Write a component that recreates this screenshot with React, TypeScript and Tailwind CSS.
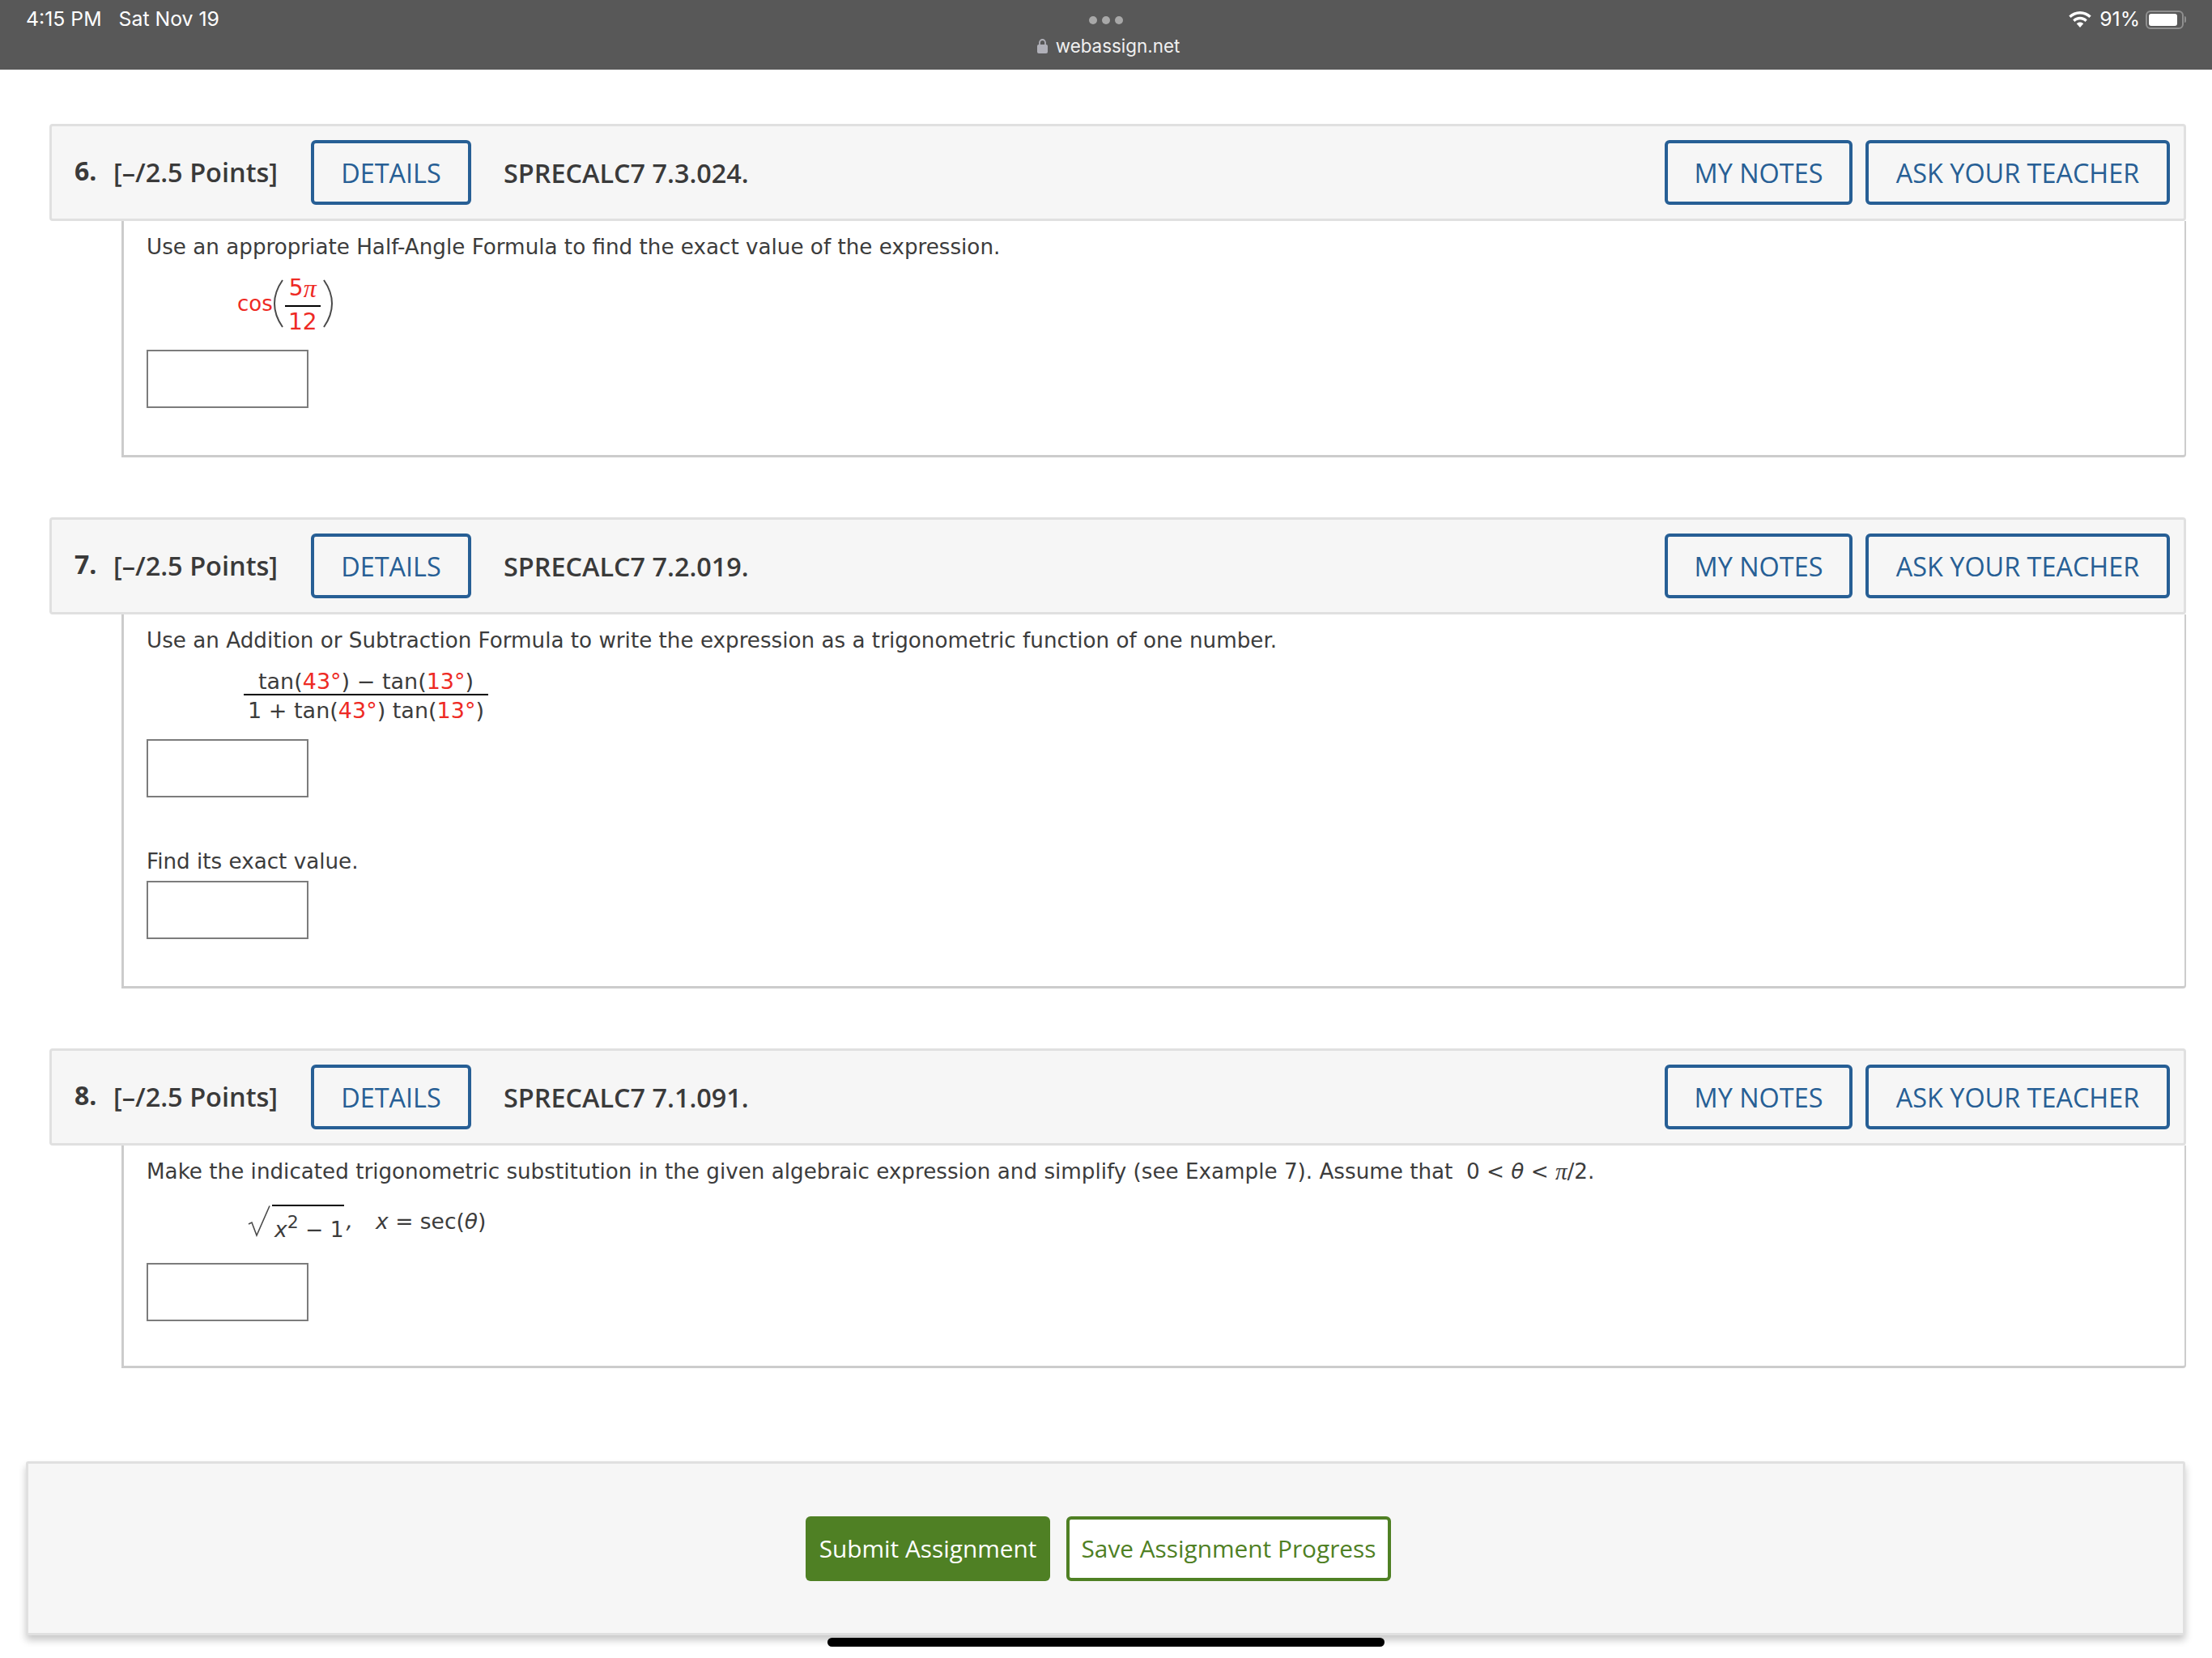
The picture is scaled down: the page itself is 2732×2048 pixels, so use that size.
import type { ReactNode } from "react";

const RED = "text-[#ee2a24]";

function Answer({ className = "" }: { className?: string }) {
  return <div className={`h-[72px] w-[200px] border-[2px] border-[#7c7c7c] bg-white ${className}`} />;
}

function OutlineButton({ label, width }: { label: string; width: string }) {
  return (
    <div
      className={`flex h-[80px] items-center justify-center rounded-[6px] border-[4px] border-[#275f95] text-[32.400px] font-medium text-[#275f95] ${width}`}
    >
      {label}
    </div>
  );
}

function Question({
  num,
  code,
  bodyHeight,
  children,
}: {
  num: string;
  code: string;
  bodyHeight: string;
  children: ReactNode;
}) {
  return (
    <section className="w-[2639px]">
      <header className="flex h-[120px] items-center rounded-[4px] border-[3px] border-[#e0e0e0] bg-[#f6f6f6] pl-[28px] pr-[17px] font-['Open_Sans',sans-serif] text-[#3a3a3a]">
        <span className="mb-[4px] w-[48px] text-[32px] font-bold">{num}</span>
        <span className="w-[244px] text-[32.500px] font-semibold">[–/2.5 Points]</span>
        <OutlineButton label="DETAILS" width="w-[198px]" />
        <span className="ml-[40px] text-[32.400px] font-semibold">{code}</span>
        <div className="ml-auto flex gap-[16px]">
          <OutlineButton label="MY NOTES" width="w-[232px]" />
          <OutlineButton label="ASK YOUR TEACHER" width="w-[376px]" />
        </div>
      </header>
      <div
        className={`ml-[89px] rounded-br-[4px] border-b-[3px] border-l-[3px] border-r-[2px] border-[#cccccc] bg-white pl-[28px] font-['DejaVu_Sans',sans-serif] text-[26.200px] text-[#3c3c3c] ${bodyHeight}`}
      >
        {children}
      </div>
    </section>
  );
}

function Wifi() {
  return (
    <svg viewBox="0 0 28 20" className="h-[20px] w-[28px]" fill="#ffffff">
      <path d="M14 0C8.600 0 3.800 2.100.300 5.600l2.300 2.500C5.500 5.200 9.500 3.400 14 3.400s8.500 1.800 11.400 4.700l2.300-2.500C24.200 2.100 19.400 0 14 0z" />
      <path d="M14 6.800c-3.400 0-6.500 1.400-8.800 3.600l2.300 2.500c1.700-1.600 4-2.700 6.500-2.700s4.800 1.100 6.500 2.700l2.300-2.500C20.500 8.200 17.400 6.800 14 6.800z" />
      <path d="M14 13.600c-1.600 0-3.100.7-4.200 1.700L14 20l4.200-4.700c-1.100-1-2.600-1.700-4.200-1.700z" />
    </svg>
  );
}

function Paren({ flip = false }: { flip?: boolean }) {
  return (
    <svg viewBox="0 0 15 60" className={`mb-[6px] h-[60px] w-[15px] ${flip ? "-scale-x-100" : ""}`} fill="none">
      <path d="M12 1C5 11 2 21 2 30s3 19 10 29" stroke="#4a4a4a" strokeWidth="2" />
    </svg>
  );
}

export default function App() {
  return (
    <div className="relative h-[2048px] w-[2732px] overflow-hidden bg-white">
      <div className="grid h-[86px] grid-cols-[1fr_auto_1fr] bg-[#585858] font-['Inter',sans-serif] text-[24.800px] text-white">
        <div className="flex h-[48px] items-center gap-[21px] pl-[32px]">
          <span>4:15 PM</span>
          <span>Sat Nov 19</span>
        </div>
        <div className="flex flex-col items-center pt-[20px]">
          <div className="flex gap-[6px]">
            <span className="h-[10px] w-[10px] rounded-full bg-[#a8a8a8]" />
            <span className="h-[10px] w-[10px] rounded-full bg-[#a8a8a8]" />
            <span className="h-[10px] w-[10px] rounded-full bg-[#a8a8a8]" />
          </div>
          <div className="ml-[6px] mt-[10px] flex items-center gap-[10px] text-[22.400px] text-[#f0f0f0]">
            <svg viewBox="0 0 13 19" className="h-[19px] w-[13px]">
              <path d="M3 9V5.500a3.500 3.500 0 0 1 7 0V9" fill="none" stroke="#b0b0b8" strokeWidth="1.800" />
              <rect x="0" y="8" width="13" height="11" rx="2" fill="#b0b0b8" />
            </svg>
            <span>webassign.net</span>
          </div>
        </div>
        <div className="flex h-[48px] items-center justify-end gap-[7px] pr-[32px]">
          <Wifi />
          <span className="ml-[3px]">91%</span>
          <div className="flex items-center">
            <div className="h-[23px] w-[47px] rounded-[6px] border-[2px] border-[#8f8f8f] p-[2px]">
              <div className="h-full w-[90%] rounded-[3px] bg-white" />
            </div>
            <div className="ml-[1px] h-[8px] w-[2px] rounded-r-full bg-[#8f8f8f]" />
          </div>
        </div>
      </div>

      <main className="flex flex-col gap-[74px] pl-[61px] pt-[67px]">
        <Question num="6." code="SPRECALC7 7.3.024." bodyHeight="h-[292px]">
          <p className="flex h-[64px] items-center pt-[2px]">Use an appropriate Half-Angle Formula to find the exact value of the expression.</p>
          <div className={`ml-[112px] mt-[8px] flex h-[66px] items-center text-[26px] ${RED}`}>
            <span className="mb-[6px]">cos</span>
            <Paren />
            <div className="-ml-[1px] flex w-[46px] flex-col items-center text-[28px]">
              <span className="flex h-[32px] items-center pb-[10px] leading-none">
                5<span className="font-['Liberation_Serif',serif] text-[32px] italic">π</span>
              </span>
              <span className="h-[2px] w-[44px] shrink-0 bg-black" />
              <span className="flex h-[32px] items-center pt-[6px] leading-none">12</span>
            </div>
            <Paren flip />
          </div>
          <Answer className="mt-[21px]" />
        </Question>

        <Question num="7." code="SPRECALC7 7.2.019." bodyHeight="h-[462px]">
          <p className="flex h-[64px] items-center pt-[2px]">Use an Addition or Subtraction Formula to write the expression as a trigonometric function of one number.</p>
          <div className="ml-[120px] flex w-[302px] flex-col items-center text-[27px]">
            <span className="flex h-[34px] items-center pt-[5px]">
              tan(<span className={RED}>43°</span>) − tan(<span className={RED}>13°</span>)
            </span>
            <span className="h-[2px] w-full bg-black" />
            <span className="flex h-[38px] items-center">
              1 + tan(<span className={RED}>43°</span>) tan(<span className={RED}>13°</span>)
            </span>
          </div>
          <Answer className="mt-[16px]" />
          <p className="mt-[60px] flex h-[40px] items-center">Find its exact value.</p>
          <Answer className="mt-[3px]" />
        </Question>

        <Question num="8." code="SPRECALC7 7.1.091." bodyHeight="h-[275px]">
          <p className="flex h-[64px] items-center whitespace-pre pt-[2px]">
            Make the indicated trigonometric substitution in the given algebraic expression and simplify (see Example 7). Assume that{"  "}0 &lt;{" "}
            <span className="italic">θ</span> &lt; <span className="font-['Liberation_Serif',serif] text-[29px] italic">π</span>/2.
          </p>
          <div className="ml-[125px] mt-[9px] flex h-[40px] items-end text-[26.500px]">
            <svg viewBox="0 0 30 40" className="h-[40px] w-[30px]" fill="none">
              <path d="M1 24l4-2 6 16L27 1.500" stroke="#4a4a4a" strokeWidth="1.600" />
            </svg>
            <span className="mb-[-4px] flex h-[44px] items-end border-t-[2px] border-black pl-[3px] leading-none whitespace-pre">
              <span className="italic">x</span>
              <span className="relative top-[-11px] text-[22px]">2</span> − 1
            </span>
            <span className="ml-[3px] italic">,</span>
            <span className="relative top-[-6px] ml-[28px] leading-none whitespace-pre">
              <span className="italic">x</span> = sec(<span className="italic">θ</span>)
            </span>
          </div>
          <Answer className="mt-[32px]" />
        </Question>
      </main>

      <footer className="ml-[32px] mt-[115px] flex h-[215px] w-[2667px] items-center justify-center gap-[20px] rounded-[3px] border-[3px] border-[#e0e0e0] bg-[#f6f6f6] pr-[18px] font-['Open_Sans',sans-serif] text-[29.800px] shadow-[0_6px_10px_rgba(0,0,0,0.22)]">
        <div className="flex h-[80px] w-[302px] items-center justify-center rounded-[6px] bg-[#4f8024] pt-[2px] text-white">
          Submit Assignment
        </div>
        <div className="flex h-[80px] w-[401px] items-center justify-center rounded-[6px] border-[4px] border-[#4f8024] bg-white pt-[2px] text-[#4f8024]">
          Save Assignment Progress
        </div>
      </footer>

      <div className="absolute left-[1022px] top-[2023px] h-[11px] w-[688px] rounded-full bg-black" />
    </div>
  );
}
